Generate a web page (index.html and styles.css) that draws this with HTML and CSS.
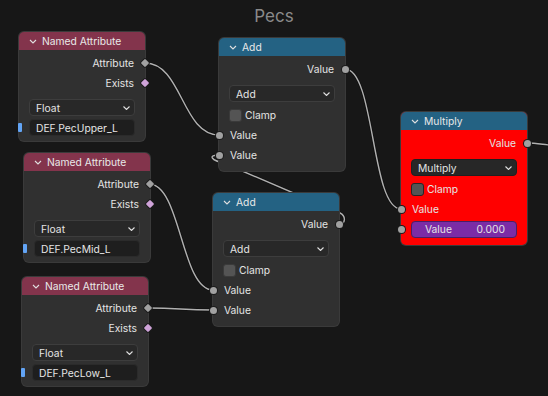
FILE: index.html
```html
<!DOCTYPE html>
<html>
<head>
<meta charset="utf-8">
<link rel="stylesheet" href="styles.css">
</head>
<body>
<div class="canvas">
  <svg class="wires" width="548" height="396" viewBox="0 0 548 396">
    <g fill="none" stroke="#0c0c0c" stroke-width="3" opacity="0.6">
      <path d="M145,63 C182,63 182,135 219,135"/>
      <path d="M149,184 C181,184 181,290 213,290"/>
      <path d="M148,308 C180,308 181,310 213,310"/>
      <path d="M345,69 C375,69 371,209 401,209"/>
      <path d="M339,224 C346,224 346,216 340,213 L226,164 C210,160 208,155 219,155"/>
      <path d="M527,143 C538,143 544,145 560,146"/>
    </g>
    <g fill="none" stroke="#b0b0b0" stroke-width="1.4">
      <path d="M145,63 C182,63 182,135 219,135"/>
      <path d="M149,184 C181,184 181,290 213,290"/>
      <path d="M148,308 C180,308 181,310 213,310"/>
      <path d="M345,69 C375,69 371,209 401,209"/>
      <path d="M339,224 C346,224 346,216 340,213 L226,164 C210,160 208,155 219,155"/>
      <path d="M527,143 C538,143 544,145 560,146"/>
    </g>
  </svg>

  <div class="title">Pecs</div>

  <div class="node n1">
    <div class="head head-attr"><svg class="chev" width="8" height="5" viewBox="0 0 8 5"><polyline points="1,1 4,4 7,1"/></svg>Named Attribute</div>
    <div class="body">
      <div class="row out">Attribute<span class="sock diamond"></span></div>
      <div class="row out">Exists<span class="sock diamond pink"></span></div>
      <div class="select"><span>Float</span><svg class="dd" width="7" height="4" viewBox="0 0 7 4"><polyline points="0.5,0.5 3.5,3.5 6.5,0.5"/></svg></div>
      <div class="field"><span class="marker"></span>DEF.PecUpper_L</div>
    </div>
  </div>

  <div class="node n2">
    <div class="head head-math"><svg class="chev" width="8" height="5" viewBox="0 0 8 5"><polyline points="1,1 4,4 7,1"/></svg>Add</div>
    <div class="body math">
      <div class="row out">Value<span class="sock"></span></div>
      <div class="select"><span>Add</span><svg class="dd" width="7" height="4" viewBox="0 0 7 4"><polyline points="0.5,0.5 3.5,3.5 6.5,0.5"/></svg></div>
      <div class="row check"><span class="box"></span>Clamp</div>
      <div class="row in"><span class="sock"></span>Value</div>
      <div class="row in"><span class="sock"></span>Value</div>
    </div>
  </div>

  <div class="node n3 red">
    <div class="head head-math"><svg class="chev" width="8" height="5" viewBox="0 0 8 5"><polyline points="1,1 4,4 7,1"/></svg>Multiply</div>
    <div class="body math">
      <div class="row out">Value<span class="sock"></span></div>
      <div class="select"><span>Multiply</span><svg class="dd" width="7" height="4" viewBox="0 0 7 4"><polyline points="0.5,0.5 3.5,3.5 6.5,0.5"/></svg></div>
      <div class="row check"><span class="box"></span>Clamp</div>
      <div class="row in"><span class="sock"></span>Value</div>
      <div class="row in"><span class="sock"></span><div class="num"><span>Value</span><span>0.000</span></div></div>
    </div>
  </div>

  <div class="node n4">
    <div class="head head-attr"><svg class="chev" width="8" height="5" viewBox="0 0 8 5"><polyline points="1,1 4,4 7,1"/></svg>Named Attribute</div>
    <div class="body">
      <div class="row out">Attribute<span class="sock diamond"></span></div>
      <div class="row out">Exists<span class="sock diamond pink"></span></div>
      <div class="select"><span>Float</span><svg class="dd" width="7" height="4" viewBox="0 0 7 4"><polyline points="0.5,0.5 3.5,3.5 6.5,0.5"/></svg></div>
      <div class="field"><span class="marker"></span>DEF.PecMid_L</div>
    </div>
  </div>

  <div class="node n5">
    <div class="head head-math"><svg class="chev" width="8" height="5" viewBox="0 0 8 5"><polyline points="1,1 4,4 7,1"/></svg>Add</div>
    <div class="body math">
      <div class="row out">Value<span class="sock"></span></div>
      <div class="select"><span>Add</span><svg class="dd" width="7" height="4" viewBox="0 0 7 4"><polyline points="0.5,0.5 3.5,3.5 6.5,0.5"/></svg></div>
      <div class="row check"><span class="box"></span>Clamp</div>
      <div class="row in"><span class="sock"></span>Value</div>
      <div class="row in"><span class="sock"></span>Value</div>
    </div>
  </div>

  <div class="node n6">
    <div class="head head-attr"><svg class="chev" width="8" height="5" viewBox="0 0 8 5"><polyline points="1,1 4,4 7,1"/></svg>Named Attribute</div>
    <div class="body">
      <div class="row out">Attribute<span class="sock diamond"></span></div>
      <div class="row out">Exists<span class="sock diamond pink"></span></div>
      <div class="select"><span>Float</span><svg class="dd" width="7" height="4" viewBox="0 0 7 4"><polyline points="0.5,0.5 3.5,3.5 6.5,0.5"/></svg></div>
      <div class="field"><span class="marker"></span>DEF.PecLow_L</div>
    </div>
  </div>
</div>
</body>
</html>
```

FILE: styles.css
```css
* { box-sizing: border-box; margin: 0; padding: 0; }

html, body {
  width: 548px;
  height: 396px;
  overflow: hidden;
  background: #171717;
}

body {
  font-family: Inter, "DejaVu Sans", sans-serif;
  font-size: 10.3px;
  color: #e4e4e4;
}

.canvas {
  position: relative;
  width: 548px;
  height: 396px;
}

.wires {
  position: absolute;
  left: 0;
  top: 0;
}

.title {
  padding-top: 5px;
  text-align: center;
  font-size: 17px;
  line-height: 22px;
  color: #8a8a8a;
}

.node {
  position: absolute;
  width: 126px;
  background: #303030;
  border-radius: 5px;
  box-shadow: 0 0 0 1px #3a3a3a;
}

.n1 { left: 19px; top: 32px; }
.n2 { left: 219px; top: 38px; }
.n3 { left: 401px; top: 112px; }
.n4 { left: 24px; top: 153px; }
.n5 { left: 213px; top: 193px; }
.n6 { left: 22px; top: 277px; }

.node.red { background: #ff0000; box-shadow: 0 0 0 1px #3a3a3a; }

.head {
  height: 18px;
  display: flex;
  align-items: center;
  gap: 5px;
  padding-left: 10px;
  border-radius: 5px 5px 0 0;
  color: #e8e8e8;
}

.head-attr { background: #83344c; }
.head-math { background: #246283; }

.chev polyline, .dd polyline {
  fill: none;
  stroke: #e0e0e0;
  stroke-width: 1.1;
}

.body { padding: 3px 0 5px; }
.body.math { padding-bottom: 6px; }

.row {
  position: relative;
  height: 20px;
  display: flex;
  align-items: center;
}

.row.out { justify-content: flex-end; padding-right: 11px; }
.row.in { padding-left: 11px; }

.sock {
  position: absolute;
  top: 50%;
  width: 7px;
  height: 7px;
  margin-top: -3.5px;
  border-radius: 50%;
  background: #a1a1a1;
  box-shadow: 0 0 0 1px #1c1c1c;
}

.out .sock { right: -3.5px; }
.in .sock { left: -3.5px; }

.sock.diamond {
  width: 6px;
  height: 6px;
  margin-top: -3px;
  right: -3px;
  border-radius: 1px;
  transform: rotate(45deg);
}

.sock.pink { background: #cfa3d9; }

.select {
  margin: 6px 10px 0;
  height: 17px;
  display: flex;
  align-items: center;
  justify-content: space-between;
  padding: 0 4px 0 6px;
  background: #282828;
  border: 1px solid #3d3d3d;
  border-radius: 4px;
}

.red .select { background: #272727; border-color: #1f1f1f; }

.field {
  position: relative;
  margin: 3px 10px 0;
  height: 17px;
  display: flex;
  align-items: center;
  padding: 0 6px;
  background: #1e1e1e;
  border: 1px solid #2b2b2b;
  border-radius: 4px;
}

.marker {
  position: absolute;
  left: -12px;
  top: 3px;
  width: 4px;
  height: 9px;
  background: #62a4f5;
  border-radius: 1px;
}

.row.check {
  margin-top: 3px;
  padding-left: 10px;
  gap: 3px;
}

.box {
  width: 13px;
  height: 13px;
  background: #545454;
  border: 1px solid #3a3a3a;
  border-radius: 3px;
}

.red .box { border-color: #262626; }

.num {
  flex: 1;
  margin-left: -1px;
  margin-right: 10px;
  height: 17px;
  display: flex;
  align-items: center;
  justify-content: space-between;
  padding: 0 11px 0 13px;
  background: #7b2ca6;
  border: 1px solid #4a1f63;
  border-radius: 4px;
}
```
